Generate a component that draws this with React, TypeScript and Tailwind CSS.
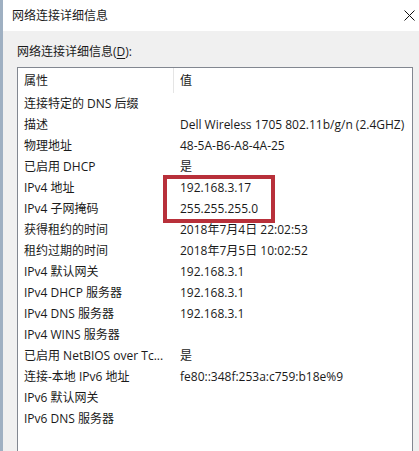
const rows: Array<[string, string]> = [
  ['连接特定的 DNS 后缀', ''],
  ['描述', 'Dell Wireless 1705 802.11b/g/n (2.4GHZ)'],
  ['物理地址', '48-5A-B6-A8-4A-25'],
  ['已启用 DHCP', '是'],
  ['IPv4 地址', '192.168.3.17'],
  ['IPv4 子网掩码', '255.255.255.0'],
  ['获得租约的时间', '2018年7月4日 22:02:53'],
  ['租约过期的时间', '2018年7月5日 10:02:52'],
  ['IPv4 默认网关', '192.168.3.1'],
  ['IPv4 DHCP 服务器', '192.168.3.1'],
  ['IPv4 DNS 服务器', '192.168.3.1'],
  ['IPv4 WINS 服务器', ''],
  ['已启用 NetBIOS over Tc...', '是'],
  ['连接-本地 IPv6 地址', 'fe80::348f:253a:c759:b18e%9'],
  ['IPv6 默认网关', ''],
  ['IPv6 DNS 服务器', ''],
]

const App = () => {
  return (
    <div className="flex h-[451px] w-[419px] overflow-hidden bg-white font-['Open_Sans','Noto_Sans_CJK_SC',sans-serif] text-[12px] text-[#1a1a1a]">
      {/* window edge */}
      <div className="w-[3px] shrink-0 bg-[#9fb0c2]" />
      <div className="flex min-w-0 flex-1 flex-col">
        {/* title bar */}
        <header className="flex h-[31px] shrink-0 items-center justify-between bg-white pl-[9px] pr-[4px]">
          <span className="leading-none">网络连接详细信息</span>
          <svg width="11" height="11" viewBox="0 0 11 11" className="mt-[-1px]">
            <path d="M0.5 0.5 L10.5 10.5 M10.5 0.5 L0.5 10.5" stroke="#111" strokeWidth="1" fill="none" />
          </svg>
        </header>
        <div className="flex min-h-0 flex-1 flex-col bg-[#f0f0f0] pl-[14px] pr-[6px] pt-[13px]">
          <div className="h-[16px] leading-[16px]">
            网络连接详细信息(<span className="underline underline-offset-2">D</span>):
          </div>
          <div className="relative mt-[7px] flex-1 overflow-hidden border border-b-0 border-[#828790] bg-white">
            <div className="flex h-[25px] items-center">
              <div className="flex h-full w-[156px] shrink-0 items-center border-r border-[#e5e5e5] pl-[6px]">属性</div>
              <div className="pl-[6px]">值</div>
            </div>
            {rows.map(([name, value]) => (
              <div key={name} className="flex h-[21px] items-center whitespace-nowrap">
                <div className="w-[156px] shrink-0 overflow-hidden pl-[6px]">{name}</div>
                <div className="pl-[6px]">{value}</div>
              </div>
            ))}
            {/* annotation */}
            <div className="absolute left-[145px] top-[107px] h-[48px] w-[112px] border-4 border-[#b8303a]" />
          </div>
        </div>
      </div>
    </div>
  )
}

export default App
